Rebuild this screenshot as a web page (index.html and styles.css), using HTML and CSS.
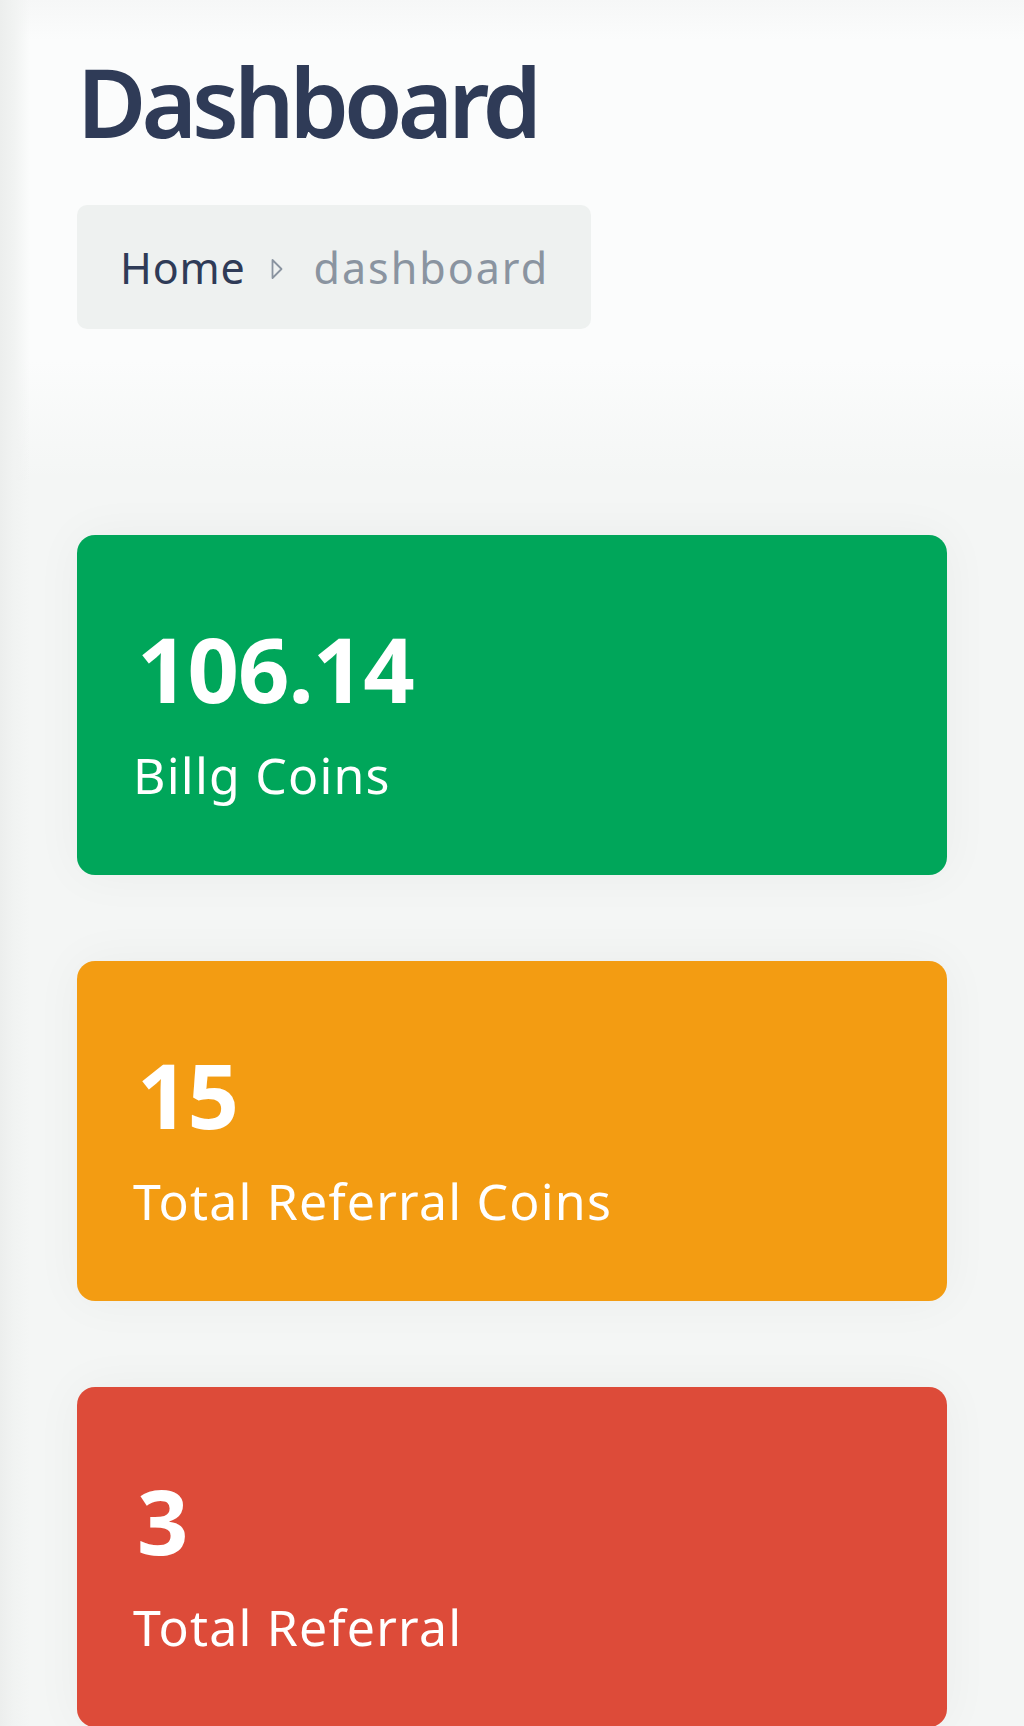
FILE: index.html
```html
<!DOCTYPE html>
<html>
<head>
<meta charset="utf-8">
<link rel="stylesheet" href="styles.css">
</head>
<body>
<div class="page">
  <header class="content-header">
    <h1 class="title">Dashboard</h1>
    <nav class="breadcrumb">
      <span class="crumb-home">Home</span>
      <svg class="crumb-sep" width="14" height="24" viewBox="0 0 14 24"><path d="M2.5 3 L11.5 12 L2.5 21 Z" fill="none" stroke="#8a94a0" stroke-width="1.8" stroke-linejoin="round"/></svg>
      <span class="crumb-current">dashboard</span>
    </nav>
  </header>
  <section class="cards">
    <div class="card card-green">
      <div class="card-value">106.14</div>
      <div class="card-label">Billg Coins</div>
    </div>
    <div class="card card-orange">
      <div class="card-value">15</div>
      <div class="card-label">Total Referral Coins</div>
    </div>
    <div class="card card-red">
      <div class="card-value">3</div>
      <div class="card-label">Total Referral</div>
    </div>
  </section>
</div>
</body>
</html>
```
FILE: styles.css
```css
html, body {
  margin: 0;
  padding: 0;
}
body {
  background: linear-gradient(to right, #eceeed 0, #f1f3f2 14px, #f4f6f5 30px);
  font-family: "Noto Sans", "Open Sans", sans-serif;
  overflow: hidden;
}
.page {
  height: 1726px;
}
.content-header {
  background: linear-gradient(to right, #eceeed 0, #f1f3f2 14px, rgba(244,246,245,0) 30px),
              linear-gradient(to bottom, #f6f7f7 0, #fbfcfc 40px, #fbfcfc 360px, rgba(251,252,252,0) 480px);
  padding: 54px 0 0 77px;
  height: 426px;
}
.title {
  margin: 0;
  font-size: 95px;
  line-height: 95px;
  font-weight: 600;
  color: #2f3b57;
  letter-spacing: -5px;
}
.breadcrumb {
  margin-top: 56px;
  width: 514px;
  height: 124px;
  box-sizing: border-box;
  background: #eef1f0;
  border-radius: 10px;
  display: flex;
  align-items: center;
  padding-left: 43px;
  font-size: 43px;
  letter-spacing: 0.8px;
}
.crumb-home {
  color: #2f3b57;
}
.crumb-sep {
  margin: 4px 30px 0 24px;
}
.crumb-current {
  color: #8a94a0;
  letter-spacing: 2px;
}
.cards {
  padding: 55px 0 0 77px;
  display: flex;
  flex-direction: column;
  gap: 86px;
}
.card {
  width: 870px;
  height: 340px;
  box-sizing: border-box;
  border-radius: 18px;
  padding: 88px 0 0 60px;
  color: #ffffff;
  box-shadow: 0 0 50px rgba(0,0,0,0.045);
}
.card-green { background: #00a65a; }
.card-orange { background: #f39c12; }
.card-red { background: #dd4b39; }
.card-value {
  font-size: 90px;
  line-height: 90px;
  font-weight: 700;
  letter-spacing: -1px;
}
.card-label {
  margin-top: 37px;
  margin-left: -4px;
  font-size: 50px;
  line-height: 50px;
  font-weight: 400;
  letter-spacing: 1.2px;
}
```
